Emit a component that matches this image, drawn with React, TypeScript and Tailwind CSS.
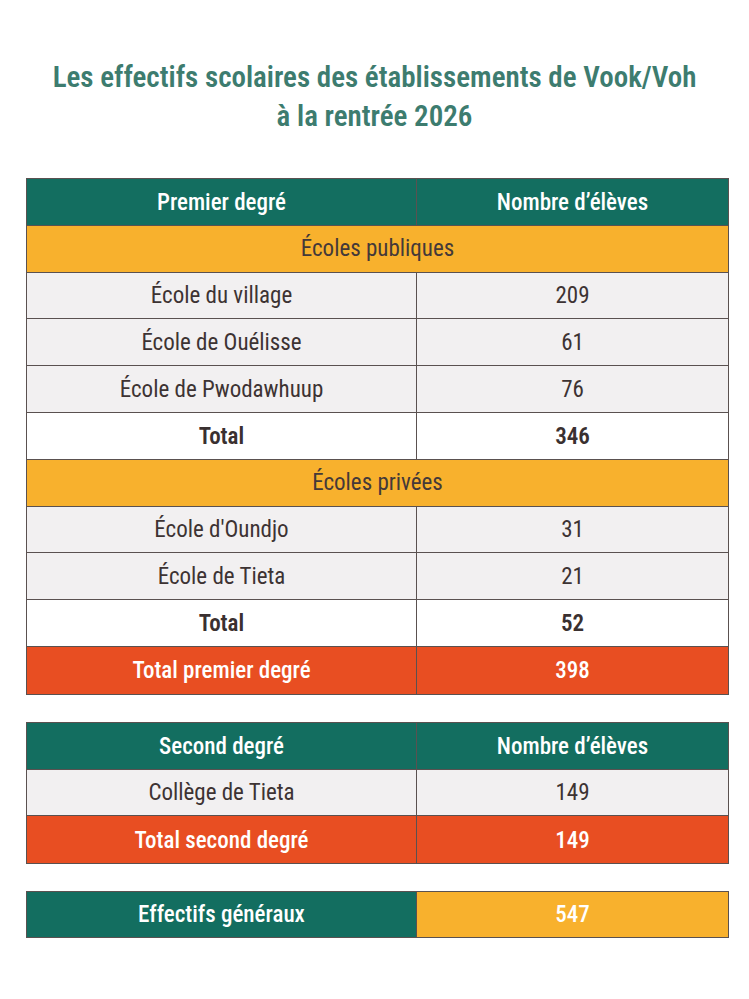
const font = { fontFamily: 'Roboto, "Noto Sans", sans-serif', fontStretch: "condensed" }

type Row = { label: string; value?: string; kind: "head" | "section" | "item" | "total" | "grand" }

const premier: Row[] = [
    { label: "Premier degré", value: "Nombre d’élèves", kind: "head" },
    { label: "Écoles publiques", kind: "section" },
    { label: "École du village", value: "209", kind: "item" },
    { label: "École de Ouélisse", value: "61", kind: "item" },
    { label: "École de Pwodawhuup", value: "76", kind: "item" },
    { label: "Total", value: "346", kind: "total" },
    { label: "Écoles privées", kind: "section" },
    { label: "École d'Oundjo", value: "31", kind: "item" },
    { label: "École de Tieta", value: "21", kind: "item" },
    { label: "Total", value: "52", kind: "total" },
    { label: "Total premier degré", value: "398", kind: "grand" },
]

const second: Row[] = [
    { label: "Second degré", value: "Nombre d’élèves", kind: "head" },
    { label: "Collège de Tieta", value: "149", kind: "item" },
    { label: "Total second degré", value: "149", kind: "grand" },
]

const rowStyles = {
    head: "bg-[#136e60] text-white font-medium",
    section: "bg-[#f8b12d] text-[#443939]",
    item: "bg-[#f2f0f1] text-[#3d3333]",
    total: "bg-white text-[#3a3030] font-semibold",
    grand: "bg-[#e84e22] text-white font-medium",
}

const TableRow = ({ row, last }: { row: Row; last: boolean }) => {
    const border = last ? "" : "border-b border-[#5a5150]"
    const pad = row.kind === "head" ? "pt-[3px]" : "pt-[2px]"
    if (row.kind === "section") {
        return (
            <div className={`h-[46.8px] flex items-center justify-center ${pad} ${rowStyles.section} ${border}`}>
                {row.label}
            </div>
        )
    }
    return (
        <div className={`h-[46.8px] grid grid-cols-[390px_1fr] ${rowStyles[row.kind]} ${border}`}>
            <div className={`flex items-center justify-center border-r border-[#5a5150] ${pad}`}>{row.label}</div>
            <div className={`flex items-center justify-center ${pad}`}>{row.value}</div>
        </div>
    )
}

const Table = ({ rows }: { rows: Row[] }) => (
    <div className="ml-[26px] w-[703px] border border-[#5a5150]">
        {rows.map((row, i) => (
            <TableRow key={i} row={row} last={i === rows.length - 1} />
        ))}
    </div>
)

export default function App() {
    return (
        <div className="w-[749px] min-h-[999px] bg-white pt-[58px] text-[23px] font-normal" style={font}>
            <h1 className="text-center text-[29px] leading-[39px] font-semibold text-[#3d7c6f]">
                Les effectifs scolaires des établissements de Vook/Voh
                <br />
                à la rentrée 2026
            </h1>
            <div className="mt-[42px] flex flex-col gap-[27px]">
                <Table rows={premier} />
                <Table rows={second} />
                <div className="ml-[26px] w-[703px] border border-[#5a5150] h-[47px] grid grid-cols-[390px_1fr] text-white font-medium">
                    <div className="pt-[2px] flex items-center justify-center bg-[#136e60] border-r border-[#5a5150]">
                        Effectifs généraux
                    </div>
                    <div className="pt-[2px] flex items-center justify-center bg-[#f8b12d]">547</div>
                </div>
            </div>
        </div>
    )
}
